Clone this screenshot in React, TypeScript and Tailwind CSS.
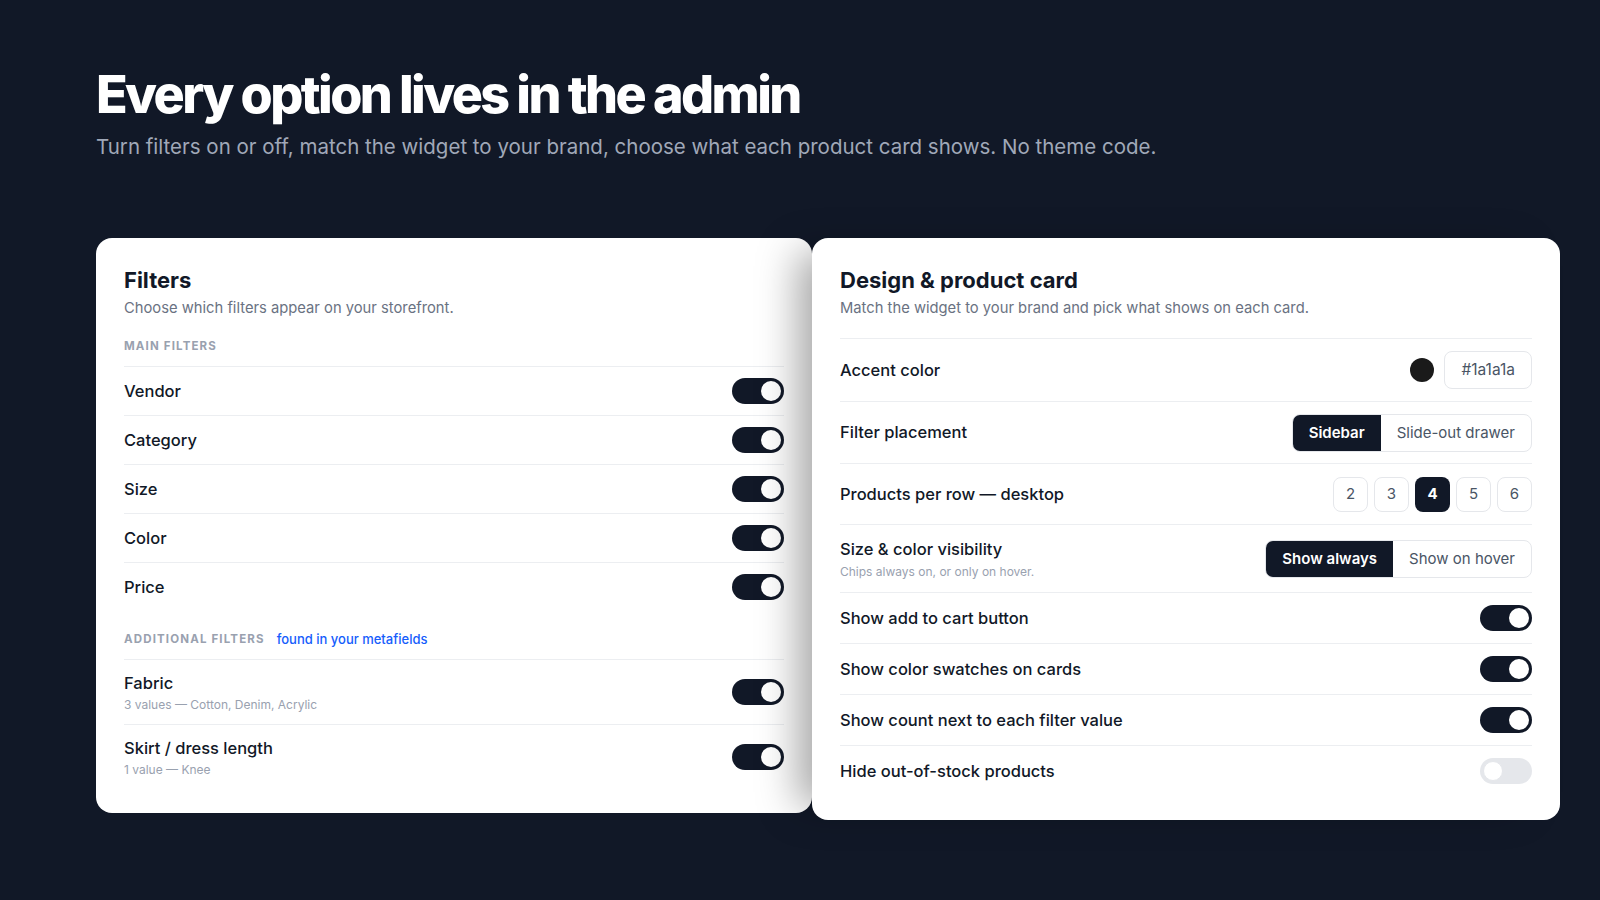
import React from 'react';

function Toggle({ on }: { on: boolean }) {
  return on ? (
    <div className="flex h-[26px] w-[52px] shrink-0 items-center justify-end rounded-full bg-[#111827] p-[3px]">
      <div className="h-5 w-5 rounded-full bg-white" />
    </div>
  ) : (
    <div className="flex h-[26px] w-[52px] shrink-0 items-center justify-start rounded-full bg-[#e5e7eb] p-[3px]">
      <div className="h-5 w-5 rounded-full border border-[#e5e7eb] bg-white" />
    </div>
  );
}

const mainFilters = ['Vendor', 'Category', 'Size', 'Color', 'Price'];
const extraFilters = [
  { name: 'Fabric', sub: '3 values — Cotton, Denim, Acrylic' },
  { name: 'Skirt / dress length', sub: '1 value — Knee' },
];
const cardToggles = [
  { name: 'Show add to cart button', on: true },
  { name: 'Show color swatches on cards', on: true },
  { name: 'Show count next to each filter value', on: true },
  { name: 'Hide out-of-stock products', on: false },
];

function FiltersCard() {
  return (
    <section className="w-[716px] shrink-0 rounded-2xl bg-white px-7 pt-7 pb-6">
      <h2 className="text-[22px] font-bold leading-7 text-[#111827]">Filters</h2>
      <p className="mt-1 text-[14.75px] leading-5 text-gray-500">Choose which filters appear on your storefront.</p>
      <div className="mt-5 mb-3 text-[11.5px] font-bold uppercase leading-4 tracking-[0.1em] text-gray-400">Main filters</div>
      {mainFilters.map((f) => (
        <div key={f} className="flex h-[49px] items-center justify-between border-t border-[#eceef1]">
          <span className="text-[16.5px] font-medium text-[#111827]">{f}</span>
          <Toggle on />
        </div>
      ))}
      <div className="mt-5 mb-3 flex items-center gap-3 leading-4">
        <span className="text-[11.5px] font-bold uppercase tracking-[0.1em] text-gray-400">Additional filters</span>
        <span className="text-[13px] font-medium text-blue-600">found in your metafields</span>
      </div>
      {extraFilters.map((f) => (
        <div key={f.name} className="flex items-center justify-between border-t border-[#eceef1] py-[11px]">
          <div>
            <div className="text-[16.5px] font-medium leading-6 text-[#111827]">{f.name}</div>
            <div className="mt-0.5 text-xs leading-4 text-gray-400">{f.sub}</div>
          </div>
          <Toggle on />
        </div>
      ))}
    </section>
  );
}

function Segmented({ options, active }: { options: string[]; active: number }) {
  return (
    <div className="flex overflow-hidden rounded-lg border border-[#e5e7eb]">
      {options.map((o, i) =>
        i === active ? (
          <div key={o} className="bg-[#111827] px-4 py-2 text-[15px] font-semibold leading-5 text-white">{o}</div>
        ) : (
          <div key={o} className="px-4 py-2 text-[15px] leading-5 text-gray-600">{o}</div>
        ),
      )}
    </div>
  );
}

function DesignCard() {
  return (
    <section className="relative z-10 w-[748px] shrink-0 rounded-2xl bg-white px-7 pt-7 pb-6 shadow-[-28px_0_40px_-14px_rgba(0,0,0,0.35)]">
      <h2 className="text-[22px] font-bold leading-7 text-[#111827]">Design &amp; product card</h2>
      <p className="mt-1 text-[14.75px] leading-5 text-gray-500">Match the widget to your brand and pick what shows on each card.</p>
      <div className="mt-5">
        <div className="flex h-[63px] items-center justify-between border-t border-[#eceef1]">
          <span className="text-[16.5px] font-medium text-[#111827]">Accent color</span>
          <div className="flex items-center gap-2.5">
            <div className="h-6 w-6 rounded-full bg-[#1a1a1a]" />
            <div className="rounded-lg border border-[#e5e7eb] px-4 py-2 text-[15.5px] leading-5 text-gray-600">#1a1a1a</div>
          </div>
        </div>
        <div className="flex h-[62px] items-center justify-between border-t border-[#eceef1]">
          <span className="text-[16.5px] font-medium text-[#111827]">Filter placement</span>
          <Segmented options={['Sidebar', 'Slide-out drawer']} active={0} />
        </div>
        <div className="flex h-[61px] items-center justify-between border-t border-[#eceef1]">
          <span className="text-[16.5px] font-medium text-[#111827]">Products per row — desktop</span>
          <div className="flex gap-1.5">
            {[2, 3, 4, 5, 6].map((n) =>
              n === 4 ? (
                <div key={n} className="flex h-[35px] w-[35px] items-center justify-center rounded-lg bg-[#111827] text-[15px] font-bold text-white">{n}</div>
              ) : (
                <div key={n} className="flex h-[35px] w-[35px] items-center justify-center rounded-lg border border-[#e5e7eb] text-[15px] text-gray-600">{n}</div>
              ),
            )}
          </div>
        </div>
        <div className="flex h-[68px] items-center justify-between border-t border-[#eceef1]">
          <div>
            <div className="text-[16.5px] font-medium leading-6 text-[#111827]">Size &amp; color visibility</div>
            <div className="mt-[3px] text-xs leading-4 text-gray-400">Chips always on, or only on hover.</div>
          </div>
          <Segmented options={['Show always', 'Show on hover']} active={0} />
        </div>
        {cardToggles.map((t) => (
          <div key={t.name} className="flex h-[51px] items-center justify-between border-t border-[#eceef1]">
            <span className="text-[16.5px] font-medium text-[#111827]">{t.name}</span>
            <Toggle on={t.on} />
          </div>
        ))}
      </div>
    </section>
  );
}

export default function App() {
  return (
    <div className="min-h-screen bg-[#111827] pl-[96px] pt-[66px] font-['Inter',sans-serif]">
      <h1 className="text-[52px] font-extrabold leading-[57px] tracking-[-0.05em] text-white">Every option lives in the admin</h1>
      <p className="mt-[10px] text-[20.5px] leading-7 text-[#a0a8b8]">
        Turn filters on or off, match the widget to your brand, choose what each product card shows. No theme code.
      </p>
      <div className="mt-[77px] flex items-start">
        <FiltersCard />
        <DesignCard />
      </div>
    </div>
  );
}
